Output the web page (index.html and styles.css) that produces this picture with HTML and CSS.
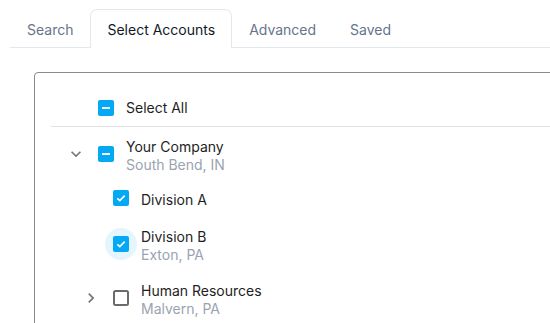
FILE: index.html
```html
<!DOCTYPE html>
<html>
<head>
<meta charset="utf-8">
<link rel="stylesheet" href="styles.css">
</head>
<body>
<div class="tabs">
  <div class="tab">Search</div>
  <div class="tab active">Select Accounts</div>
  <div class="tab">Advanced</div>
  <div class="tab">Saved</div>
</div>
<div class="panel">
  <div class="row select-all">
    <span class="toggle"></span>
    <span class="cb"><svg width="16" height="16" viewBox="0 0 16 16"><rect width="16" height="16" rx="2" fill="#03a9f4"/><rect x="4" y="7" width="8" height="2" fill="#fff"/></svg></span>
    <span class="label"><span class="title">Select All</span></span>
  </div>
  <div class="tree">
    <div class="row">
      <span class="toggle"><svg width="20" height="20" viewBox="0 0 24 24"><path d="M16.59 8.59 12 13.17 7.41 8.59 6 10l6 6 6-6z" fill="#757575"/></svg></span>
      <span class="cb"><svg width="16" height="16" viewBox="0 0 16 16"><rect width="16" height="16" rx="2" fill="#03a9f4"/><rect x="4" y="7" width="8" height="2" fill="#fff"/></svg></span>
      <span class="label"><span class="title">Your Company</span><span class="sub">South Bend, IN</span></span>
    </div>
    <div class="children">
      <div class="row child">
        <span class="toggle"></span>
        <span class="cb"><svg width="16" height="16" viewBox="0 0 16 16"><rect width="16" height="16" rx="2" fill="#03a9f4"/><path d="M4.3 8.3 6.8 10.6 11.7 5.6" fill="none" stroke="#fff" stroke-width="1.7"/></svg></span>
        <span class="label"><span class="title">Division A</span></span>
      </div>
      <div class="row child second">
        <span class="toggle"></span>
        <span class="cb focus"><svg width="16" height="16" viewBox="0 0 16 16"><rect width="16" height="16" rx="2" fill="#03a9f4"/><path d="M4.3 8.3 6.8 10.6 11.7 5.6" fill="none" stroke="#fff" stroke-width="1.7"/></svg></span>
        <span class="label"><span class="title">Division B</span><span class="sub">Exton, PA</span></span>
      </div>
    </div>
    <div class="row child">
      <span class="toggle"><svg width="20" height="20" viewBox="0 0 24 24"><path d="M10 6 8.59 7.41 13.17 12l-4.58 4.59L10 18l6-6z" fill="#757575"/></svg></span>
      <span class="cb"><svg width="16" height="16" viewBox="0 0 16 16"><rect x="1" y="1" width="14" height="14" rx="1.5" fill="none" stroke="#6b6b6b" stroke-width="2"/></svg></span>
      <span class="label"><span class="title">Human Resources</span><span class="sub">Malvern, PA</span></span>
    </div>
  </div>
</div>
</body>
</html>
```
FILE: styles.css
```css
html, body {
  margin: 0;
  padding: 0;
  background: #fff;
  overflow: hidden;
}
body {
  font-family: Inter, "Noto Sans", sans-serif;
  color: #1e1e24;
  width: 550px;
  height: 323px;
}
.tabs {
  display: flex;
  align-items: flex-end;
  margin-left: 10px;
  padding-top: 9px;
  border-bottom: 1px solid #e3e8ef;
}
.tab {
  position: relative;
  box-sizing: border-box;
  height: 39px;
  margin-bottom: -1px;
  padding: 0 16px;
  display: flex;
  align-items: center;
  font-size: 14px;
  color: #66748b;
  border: 1px solid transparent;
  border-bottom: 0;
  border-radius: 7px 7px 0 0;
}
.tab.active {
  background: #fff;
  color: #111827;
  border-color: #e3e8ef;
}
.panel {
  margin: 24px 0 0 34px;
  width: 600px;
  height: 400px;
  box-sizing: border-box;
  border: 1px solid #8a8a8e;
  border-radius: 4px;
  padding: 19px 0 0 16px;
}
.row {
  display: flex;
  align-items: center;
  padding: 5px 0 5px 13px;
}
.row.child {
  padding-left: 28px;
}
.row.second {
  margin-top: 2px;
}
.select-all {
  padding: 0 0 2px 13px;
  border-bottom: 1px solid #e2e2e2;
}
.tree {
  padding-top: 4px;
}
.tree .label {
  margin-top: 1.5px;
  margin-bottom: -1.5px;
}
.children {
  padding-bottom: 8px;
}
.toggle {
  width: 24px;
  height: 24px;
  display: flex;
  align-items: center;
  justify-content: center;
  margin-right: 2px;
  flex: none;
}
.cb {
  width: 32px;
  height: 32px;
  display: flex;
  align-items: center;
  justify-content: center;
  border-radius: 50%;
  flex: none;
}
.cb.focus {
  background: #e4f5fd;
}
.label {
  display: flex;
  flex-direction: column;
  margin-left: 4px;
  font-size: 14px;
  line-height: 18px;
}
.title {
  color: #1e1e24;
}
.sub {
  color: #9aa3b2;
}
```
